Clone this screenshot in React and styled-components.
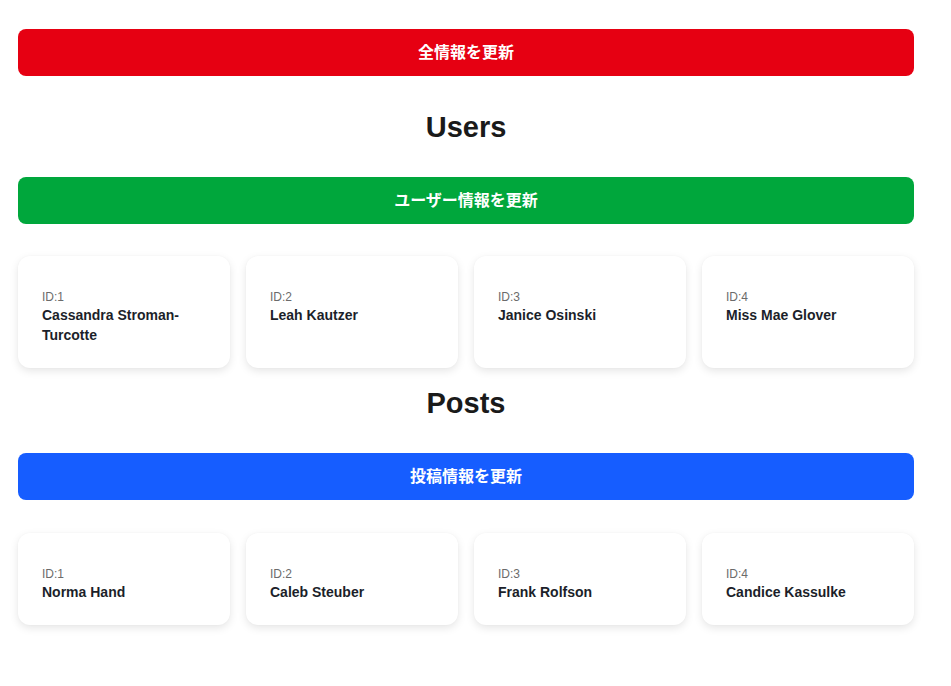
import React from 'react';
import styled, { createGlobalStyle } from 'styled-components';

const Global = createGlobalStyle`
  body { margin: 0; background: #fff; font-family: "Liberation Sans", Arial, "Noto Sans CJK JP", sans-serif; color: #1a1a1a; }
`;

const Page = styled.main`
  width: 896px;
  padding: 29px 0 40px 18px;
`;

const colors = { red: '#e60012', green: '#00a73c', blue: '#165dff' };

const RefreshButton = styled.button`
  display: block;
  width: 100%;
  height: 47px;
  padding: 0 0 3px;
  border: none;
  border-radius: 8px;
  background: ${({ $tone }) => colors[$tone]};
  color: #fff;
  font-family: "Liberation Sans", "Noto Sans CJK JP", sans-serif;
  font-size: 16px;
  font-weight: 700;
  cursor: pointer;
`;

const Heading = styled.h2`
  margin: ${({ $first }) => ($first ? '34px' : '18px')} 0 32px;
  text-align: center;
  font-size: 29px;
  line-height: 35px;
  font-weight: 700;
  color: #1a1a1a;
`;

const CardGrid = styled.div`
  display: grid;
  grid-template-columns: repeat(4, 1fr);
  gap: 16px;
  margin-top: ${({ $top }) => $top}px;
`;

const Card = styled.div`
  background: #fff;
  border-radius: 12px;
  padding: 33px 24px 23px;
  box-shadow: 0 3px 8px rgba(0, 0, 0, 0.1), 0 0 2px rgba(0, 0, 0, 0.03);
`;

const CardId = styled.div`
  font-size: 12px;
  line-height: 16px;
  color: #6b6b6b;
`;

const CardName = styled.div`
  font-size: 14px;
  line-height: 20px;
  font-weight: 700;
  color: #1c1f2a;
`;

const users = [
  { id: 1, name: 'Cassandra Stroman-Turcotte' },
  { id: 2, name: 'Leah Kautzer' },
  { id: 3, name: 'Janice Osinski' },
  { id: 4, name: 'Miss Mae Glover' },
];

const posts = [
  { id: 1, name: 'Norma Hand' },
  { id: 2, name: 'Caleb Steuber' },
  { id: 3, name: 'Frank Rolfson' },
  { id: 4, name: 'Candice Kassulke' },
];

function Cards({ items, top }) {
  return (
    <CardGrid $top={top}>
      {items.map((it) => (
        <Card key={it.id}>
          <CardId>ID:{it.id}</CardId>
          <CardName>{it.name}</CardName>
        </Card>
      ))}
    </CardGrid>
  );
}

export default function App() {
  return (
    <>
      <Global />
      <Page>
        <RefreshButton $tone="red">全情報を更新</RefreshButton>
        <Heading $first>Users</Heading>
        <RefreshButton $tone="green">ユーザー情報を更新</RefreshButton>
        <Cards items={users} top={32} />
        <Heading>Posts</Heading>
        <RefreshButton $tone="blue">投稿情報を更新</RefreshButton>
        <Cards items={posts} top={33} />
      </Page>
    </>
  );
}
